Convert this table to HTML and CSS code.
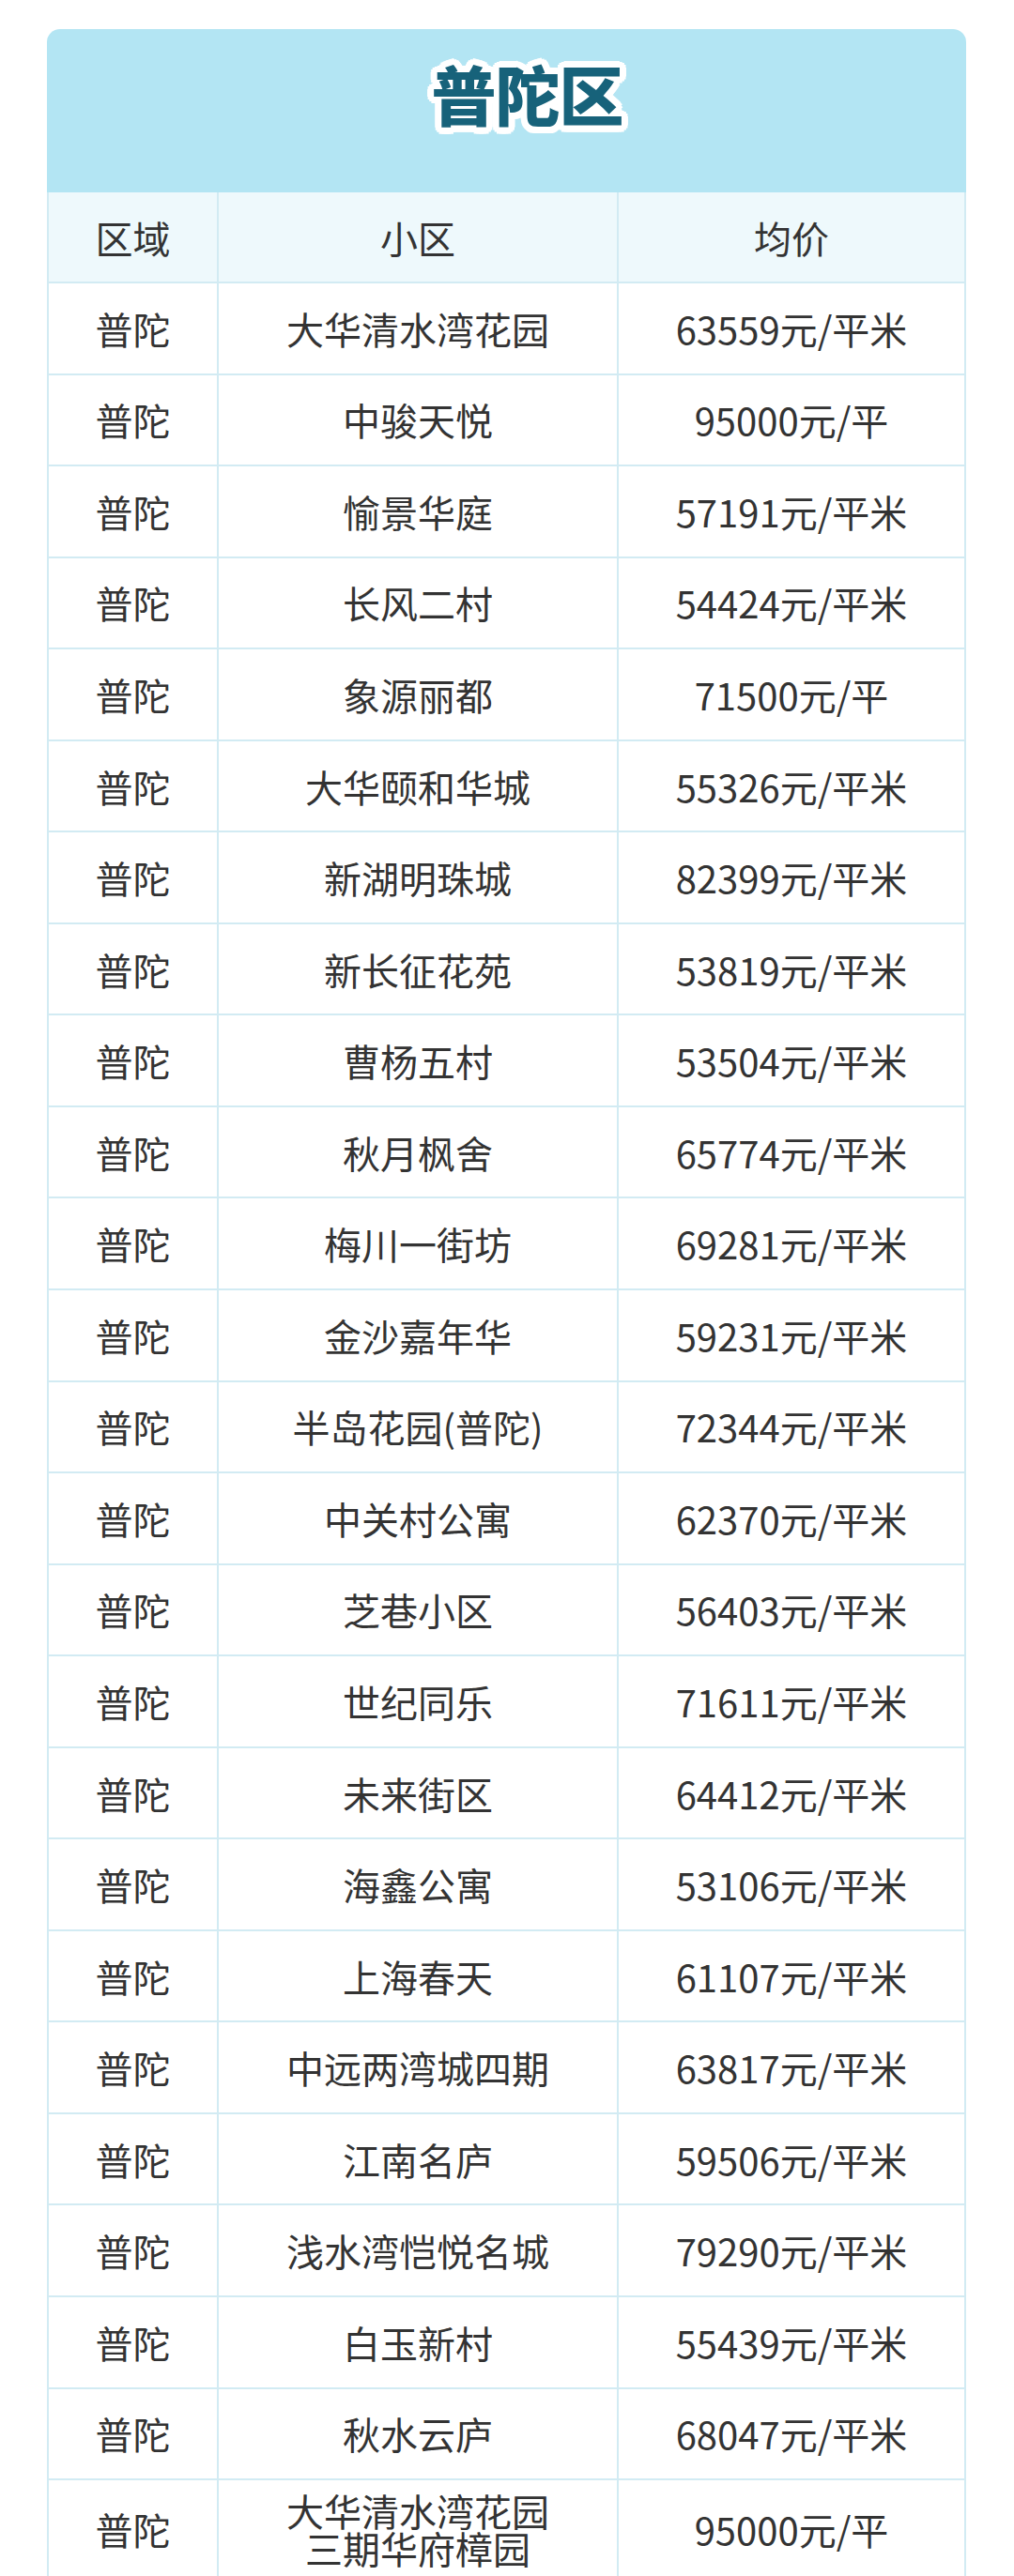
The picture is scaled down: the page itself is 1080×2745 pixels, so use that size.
FILE: index.html
```html
<!DOCTYPE html>
<html lang="zh-CN">
<head>
<meta charset="utf-8">
<title>普陀区</title>
<link rel="stylesheet" href="styles.css">
</head>
<body>
<div class="card">
  <div class="title-bar"><h1 class="title">普陀区</h1></div>
  <div class="table">
    <div class="row head"><div class="cell">区域</div><div class="cell">小区</div><div class="cell">均价</div></div>
    <div class="row"><div class="cell">普陀</div><div class="cell">大华清水湾花园</div><div class="cell">63559元/平米</div></div>
    <div class="row"><div class="cell">普陀</div><div class="cell">中骏天悦</div><div class="cell">95000元/平</div></div>
    <div class="row"><div class="cell">普陀</div><div class="cell">愉景华庭</div><div class="cell">57191元/平米</div></div>
    <div class="row"><div class="cell">普陀</div><div class="cell">长风二村</div><div class="cell">54424元/平米</div></div>
    <div class="row"><div class="cell">普陀</div><div class="cell">象源丽都</div><div class="cell">71500元/平</div></div>
    <div class="row"><div class="cell">普陀</div><div class="cell">大华颐和华城</div><div class="cell">55326元/平米</div></div>
    <div class="row"><div class="cell">普陀</div><div class="cell">新湖明珠城</div><div class="cell">82399元/平米</div></div>
    <div class="row"><div class="cell">普陀</div><div class="cell">新长征花苑</div><div class="cell">53819元/平米</div></div>
    <div class="row"><div class="cell">普陀</div><div class="cell">曹杨五村</div><div class="cell">53504元/平米</div></div>
    <div class="row"><div class="cell">普陀</div><div class="cell">秋月枫舍</div><div class="cell">65774元/平米</div></div>
    <div class="row"><div class="cell">普陀</div><div class="cell">梅川一街坊</div><div class="cell">69281元/平米</div></div>
    <div class="row"><div class="cell">普陀</div><div class="cell">金沙嘉年华</div><div class="cell">59231元/平米</div></div>
    <div class="row"><div class="cell">普陀</div><div class="cell">半岛花园(普陀)</div><div class="cell">72344元/平米</div></div>
    <div class="row"><div class="cell">普陀</div><div class="cell">中关村公寓</div><div class="cell">62370元/平米</div></div>
    <div class="row"><div class="cell">普陀</div><div class="cell">芝巷小区</div><div class="cell">56403元/平米</div></div>
    <div class="row"><div class="cell">普陀</div><div class="cell">世纪同乐</div><div class="cell">71611元/平米</div></div>
    <div class="row"><div class="cell">普陀</div><div class="cell">未来街区</div><div class="cell">64412元/平米</div></div>
    <div class="row"><div class="cell">普陀</div><div class="cell">海鑫公寓</div><div class="cell">53106元/平米</div></div>
    <div class="row"><div class="cell">普陀</div><div class="cell">上海春天</div><div class="cell">61107元/平米</div></div>
    <div class="row"><div class="cell">普陀</div><div class="cell">中远两湾城四期</div><div class="cell">63817元/平米</div></div>
    <div class="row"><div class="cell">普陀</div><div class="cell">江南名庐</div><div class="cell">59506元/平米</div></div>
    <div class="row"><div class="cell">普陀</div><div class="cell">浅水湾恺悦名城</div><div class="cell">79290元/平米</div></div>
    <div class="row"><div class="cell">普陀</div><div class="cell">白玉新村</div><div class="cell">55439元/平米</div></div>
    <div class="row"><div class="cell">普陀</div><div class="cell">秋水云庐</div><div class="cell">68047元/平米</div></div>
    <div class="row last"><div class="cell">普陀</div><div class="cell two">大华清水湾花园<br>三期华府樟园</div><div class="cell">95000元/平</div></div>
  </div>
</div>
</body>
</html>
```
FILE: styles.css
```css
html, body {
  margin: 0;
  padding: 0;
  background: #ffffff;
}
body {
  font-family: "Noto Sans CJK SC", "Noto Sans", sans-serif;
  color: #333333;
}
.card {
  margin: 31px 51px 0 50px;
  width: 979px;
  border-radius: 14px 14px 0 0;
  overflow: hidden;
  background: #ffffff;
}
.title-bar {
  height: 174px;
  background: #b3e5f3;
  box-sizing: border-box;
  padding-top: 34px;
  padding-left: 44px;
  text-align: center;
}
.title {
  margin: 0;
  font-size: 69px;
  line-height: 68px;
  font-weight: 900;
  color: #17627a;
  letter-spacing: -1px;
  text-shadow:
    7px 0 0 #fff, -7px 0 0 #fff, 0 7px 0 #fff, 0 -7px 0 #fff,
    5px 5px 0 #fff, -5px 5px 0 #fff, 5px -5px 0 #fff, -5px -5px 0 #fff,
    6.5px 2.7px 0 #fff, -6.5px 2.7px 0 #fff, 6.5px -2.7px 0 #fff, -6.5px -2.7px 0 #fff,
    2.7px 6.5px 0 #fff, -2.7px 6.5px 0 #fff, 2.7px -6.5px 0 #fff, -2.7px -6.5px 0 #fff,
    0 0 9px rgba(255,255,255,0.9);
}
.table {
  border-left: 2px solid #d2ebf3;
  border-right: 2px solid #d2ebf3;
}
.row {
  display: grid;
  grid-template-columns: 181px 426px 1fr;
  height: 97.55px;
  box-sizing: border-box;
  border-bottom: 2px solid #d2ebf3;
}
.row.head {
  height: 97px;
  background: #eef9fc;
}
.row.last {
  height: 104px;
  border-bottom: none;
}
.cell {
  display: flex;
  align-items: center;
  justify-content: center;
  text-align: center;
  font-size: 40px;
  line-height: 1;
  border-right: 2px solid #d2ebf3;
  white-space: nowrap;
}
.cell:last-child {
  border-right: none;
}
.cell.two {
  line-height: 40px;
}
```
